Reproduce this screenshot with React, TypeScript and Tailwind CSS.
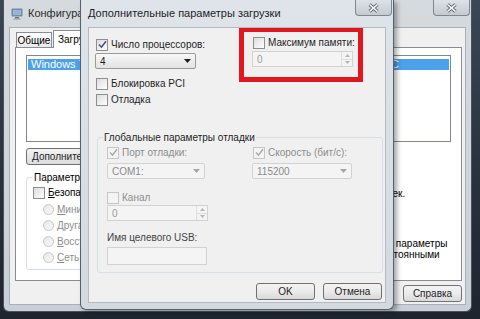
import React from "react";

// msconfig window with the "advanced boot options" dialog on top

function Check({ on = false, off = false }: { on?: boolean; off?: boolean }) {
  return (
    <span
      className={`flex h-[12px] w-[12px] shrink-0 items-center justify-center border ${
        off ? "border-[#c5c5c5] bg-[#f4f4f4]" : "border-[#8e8f8f] bg-gradient-to-br from-[#dcdcdc] to-white"
      }`}
    >
      {on && (
        <svg width="9" height="9" viewBox="0 0 9 9">
          <path d="M1 4.5 L3.5 7.2 L8 1.2" fill="none" stroke={off ? "#a9a9a9" : "#3d4f86"} strokeWidth="1.5" />
        </svg>
      )}
    </span>
  );
}

function Radio() {
  return <span className="h-[11px] w-[11px] shrink-0 rounded-full border border-[#c8c8c8] bg-gradient-to-br from-[#e6e6e6] to-[#fafafa]" />;
}

function Arrow({ off = false }: { off?: boolean }) {
  return (
    <svg width="7" height="4" viewBox="0 0 7 4">
      <path d="M0 0 H7 L3.5 4 Z" fill={off ? "#a6a6a6" : "#1e1e1e"} />
    </svg>
  );
}

function Combo({ value, off = false, w }: { value: string; off?: boolean; w: string }) {
  return (
    <div
      className={`flex h-[16px] items-center justify-between rounded-[2px] border pl-[4px] pr-[4px] ${w} ${
        off ? "border-[#d2d2d2] bg-[#f4f4f4] text-[#8a8a8a]" : "border-[#9a9a9a] bg-gradient-to-b from-[#f7f7f7] to-[#e3e3e3] text-[#1e1e1e]"
      }`}
    >
      <span>{value}</span>
      <Arrow off={off} />
    </div>
  );
}

function Spin({ value, w }: { value: string; w: string }) {
  return (
    <div className={`flex h-[16px] items-center justify-between border border-[#d2d2d2] bg-[#f4f4f4] pl-[4px] text-[#9a9a9a] ${w}`}>
      <span>{value}</span>
      <div className="flex h-full w-[11px] flex-col border-l border-[#dedede]">
        <div className="flex flex-1 items-center justify-center border-b border-[#dedede]">
          <svg width="5" height="3" viewBox="0 0 5 3"><path d="M0 3 L2.5 0 L5 3 Z" fill="#b5b5b5" /></svg>
        </div>
        <div className="flex flex-1 items-center justify-center">
          <svg width="5" height="3" viewBox="0 0 5 3"><path d="M0 0 L2.5 3 L5 0 Z" fill="#b5b5b5" /></svg>
        </div>
      </div>
    </div>
  );
}

function Btn({ children, w }: { children: React.ReactNode; w: string }) {
  return (
    <div className={`flex h-[17px] items-center justify-center rounded-[3px] border border-[#707070] bg-gradient-to-b from-[#f3f3f3] via-[#ebebeb] to-[#d9d9d9] text-[#1e1e1e] ${w}`}>
      {children}
    </div>
  );
}

function CloseBtn() {
  return (
    <div className="flex h-[16px] w-[37px] items-center justify-center rounded-b-[4px] border border-t-0 border-[#7d8792] bg-gradient-to-b from-[#dde2e7] to-[#c3cad2]">
      <svg width="11" height="10" viewBox="0 0 11 10">
        <path d="M1.5 1.5 L9.5 8.5 M9.5 1.5 L1.5 8.5" stroke="#5a636e" strokeWidth="3.2" />
        <path d="M1.5 1.5 L9.5 8.5 M9.5 1.5 L1.5 8.5" stroke="#ffffff" strokeWidth="1.6" />
      </svg>
    </div>
  );
}

function MsIcon() {
  return (
    <svg width="13" height="13" viewBox="0 0 13 13">
      <rect x="0.5" y="1.5" width="11" height="8" rx="1" fill="#7d8a98" />
      <rect x="2" y="3" width="8" height="5" fill="#8fb8e6" />
      <rect x="4" y="10" width="4" height="1.5" fill="#6c7886" />
      <rect x="2.5" y="11.5" width="7" height="1" fill="#8a96a3" />
    </svg>
  );
}

function Ul({ c, rest }: { c: string; rest: string }) {
  return (
    <span>
      <span className="underline">{c}</span>
      {rest}
    </span>
  );
}

function SysConfig() {
  return (
    <div className="absolute left-[3px] top-0 z-0 flex h-[312px] w-[469px] flex-col rounded-b-[6px] border border-t-0 border-[#4a525d] bg-gradient-to-b from-[#d5dadf] to-[#c9cfd6]">
      <div className="relative flex h-[27px] shrink-0 items-center pl-[7px]">
        <MsIcon />
        <span className="ml-[4px] text-[11px] text-[#2c2c2c]">Конфигурация системы</span>
        <div className="absolute right-[1px] top-0">
          <CloseBtn />
        </div>
      </div>
      <div className="mx-[5px] mb-[6px] flex min-h-0 flex-1 flex-col overflow-hidden border border-[#a7b0ba] bg-[#f0f0f0]">
        <div className="relative z-10 flex h-[20px] shrink-0 items-end pl-[6px]">
          <div className="mb-[1px] flex h-[15px] w-[36px] items-center justify-center border border-b-0 border-[#898c95] bg-gradient-to-b from-white to-[#e9e9e9]">
            Общие
          </div>
          <div className="ml-[1px] flex h-[18px] items-center border border-b-0 border-[#898c95] bg-white px-[4px]">Загрузка</div>
          <div className="mb-[1px] flex h-[15px] items-center border border-b-0 border-l-0 border-[#898c95] bg-gradient-to-b from-white to-[#e9e9e9] px-[4px]">
            Службы
          </div>
          <div className="mb-[1px] flex h-[15px] items-center border border-b-0 border-l-0 border-[#898c95] bg-gradient-to-b from-white to-[#e9e9e9] px-[4px]">
            Автозагрузка
          </div>
          <div className="mb-[1px] flex h-[15px] items-center border border-b-0 border-l-0 border-[#898c95] bg-gradient-to-b from-white to-[#e9e9e9] px-[4px]">
            Сервис
          </div>
        </div>
        <div className="-mt-px ml-[5px] flex h-[234px] w-[447px] shrink-0 flex-col border border-[#898c95] bg-white">
          <div className="ml-[10px] mt-[7px] h-[87px] w-[425px] border border-[#828790] bg-white pt-[3px]">
            <div className="mx-[1px] flex h-[11px] items-center whitespace-nowrap bg-[#4ba1ec] pl-[3px] text-[11px] leading-none text-white">
              <div className="flex w-[368px] justify-between">
                <span>Windows 7 (C:\Windows) : Текущая ОС;</span>
                <span>Загружаемая по умолчанию ОС</span>
              </div>
            </div>
          </div>
          <div className="ml-[10px] mt-[6px] flex">
            <div className="flex h-[17px] items-center rounded-[3px] border border-[#707070] bg-gradient-to-b from-[#f3f3f3] to-[#dcdcdc] px-[5px] text-[#1e1e1e]">
              Дополнительные параметры...
            </div>
          </div>
          <div className="flex">
            <div className="relative ml-[10px] mt-[12px] h-[93px] w-[250px] rounded-[3px] border border-[#d5dfe5] pl-[6px]">
              <span className="absolute -top-[7px] left-[5px] bg-white px-[2px]">Параметры загрузки</span>
              <div className="mt-[8px] flex items-center gap-[3px]">
                <Check />
                <Ul c="Б" rest="езопасный режим" />
              </div>
              <div className="ml-[10px] mt-[4px] flex flex-col gap-[3px] text-[#8d8d8d]">
                <div className="flex items-center gap-[3px]">
                  <Radio />
                  <Ul c="М" rest="инимальная" />
                </div>
                <div className="flex items-center gap-[3px]">
                  <Radio />
                  <Ul c="Д" rest="ругая оболочка" />
                </div>
                <div className="flex items-center gap-[3px]">
                  <Radio />
                  <Ul c="В" rest="осстановить Active Directory" />
                </div>
                <div className="flex items-center gap-[3px]">
                  <Radio />
                  <Ul c="С" rest="еть" />
                </div>
              </div>
            </div>
            <div className="ml-[22px] mt-[18px] flex flex-col">
              <div className="flex h-[20px] items-center gap-[4px]">
                <span>Таймаут:</span>
                <div className="flex h-[18px] w-[40px] items-center border border-[#abadb3] pl-[3px]">30</div>
                <span>сек.</span>
              </div>
              <div className="ml-[23px] mt-[35px] flex items-start gap-[3px]">
                <Check />
                <div className="leading-[11px]">
                  Сделать эти параметры
                  <br />
                  загрузки постоянными
                </div>
              </div>
            </div>
          </div>
        </div>
        <div className="mr-[3px] mt-[4px] flex justify-end">
          <Btn w="w-[59px]">Справка</Btn>
        </div>
      </div>
    </div>
  );
}

function BootOptions() {
  return (
    <div className="absolute left-[80px] top-0 z-10 flex h-[310px] w-[314px] flex-col rounded-b-[6px] border border-t-0 border-[#56606b] bg-gradient-to-b from-[#dfe4ea] to-[#d3d9e0] shadow-[3px_2px_5px_rgba(0,0,0,0.35)]">
      <div className="relative flex h-[27px] shrink-0 items-center pl-[7px]">
        <span className="text-[11px] text-[#1e1e1e]">Дополнительные параметры загрузки</span>
        <div className="absolute right-[1px] top-0">
          <CloseBtn />
        </div>
      </div>
      <div className="mx-[7px] mb-[6px] flex min-h-0 flex-1 flex-col overflow-hidden border border-[#b3bac3] bg-[#f0f0f0] text-[#1e1e1e]">
        <div className="flex">
          <div className="flex w-[150px] flex-col pl-[6px] pt-[10px]">
            <div className="ml-[1px] flex items-center gap-[3px]">
              <Check on />
              <span>Число процессоров:</span>
            </div>
            <div className="mt-[2px]">
              <Combo value="4" w="w-[101px]" />
            </div>
            <div className="ml-[1px] mt-[8px] flex items-center gap-[3px]">
              <Check />
              <span>Блокировка PCI</span>
            </div>
            <div className="ml-[1px] mt-[3px] flex items-center gap-[3px]">
              <Check />
              <span>Отладка</span>
            </div>
          </div>
          <div className="-mt-px h-[55px] w-[124px] border-[5px] border-[#e2161e]">
            <div className="ml-[9px] mt-[4px] flex items-center gap-[3px]">
              <Check />
              <span>Максимум памяти:</span>
            </div>
            <div className="ml-[8px] mt-[2px]">
              <Spin value="0" w="w-[101px]" />
            </div>
          </div>
        </div>
        <div className="relative ml-[8px] mt-[31px] h-[136px] w-[286px] shrink-0 rounded-[3px] border border-[#d5dfe5] pl-[9px]">
          <span className="absolute -top-[7px] left-[5px] bg-[#f0f0f0] px-[1px]">Глобальные параметры отладки</span>
          <div className="mt-[8px] grid grid-cols-[145px_100px] text-[#8d8d8d]">
            <div className="flex items-center gap-[3px]">
              <Check on off />
              <span>Порт отладки:</span>
            </div>
            <div className="ml-[1px] flex items-center gap-[3px]">
              <Check on off />
              <span>Скорость (бит/с):</span>
            </div>
            <div className="mt-[4px]">
              <Combo value="COM1:" off w="w-[98px]" />
            </div>
            <div className="mt-[4px]">
              <Combo value="115200" off w="w-[100px]" />
            </div>
          </div>
          <div className="mt-[12px] flex items-center gap-[3px] text-[#8d8d8d]">
            <Check off />
            <span>Канал</span>
          </div>
          <div className="mt-[1px]">
            <Spin value="0" w="w-[101px]" />
          </div>
          <div className="mt-[10px] text-[#444]">Имя целевого USB:</div>
          <div className="mt-[3px] h-[18px] w-[100px] border border-[#d2d2d2] bg-[#f4f4f4]" />
        </div>
        <div className="mt-[10px] flex justify-end gap-[8px] pr-[3px]">
          <Btn w="w-[59px]">OK</Btn>
          <Btn w="w-[59px]">Отмена</Btn>
        </div>
      </div>
    </div>
  );
}

export default function App() {
  return (
    <div className="relative h-[319px] w-[480px] overflow-hidden bg-gradient-to-b from-[#3b4656] via-[#2b333f] to-[#1e252f] font-['Liberation_Sans',Arial,sans-serif] text-[10px] leading-[13px]">
      <SysConfig />
      <BootOptions />
    </div>
  );
}
